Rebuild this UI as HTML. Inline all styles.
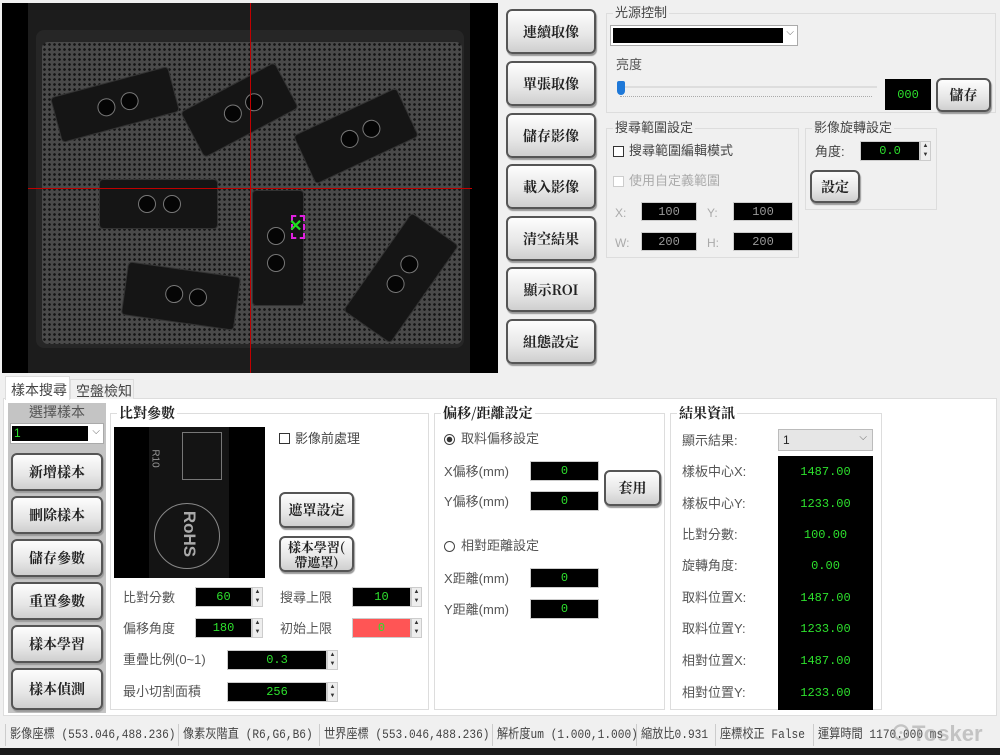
<!DOCTYPE html>
<html><head><meta charset="utf-8">
<style>
*{margin:0;padding:0;box-sizing:border-box}
body{width:1000px;height:755px;background:#f0f0f0;position:relative;overflow:hidden;font-family:"Liberation Sans","Noto Sans CJK TC",sans-serif;font-size:13px;color:#333}
.a{position:absolute}
.btn{position:absolute;border:2px solid #555;border-radius:6px;background:linear-gradient(#fdfdfd,#e6e6e6 60%,#cfcfcf);box-shadow:1px 2px 1px #999;font-family:"Noto Serif CJK SC","Liberation Serif",serif;font-weight:bold;font-size:14px;color:#222;display:flex;align-items:center;justify-content:center;text-align:center;line-height:16px}
.grp{position:absolute;border:1px solid #ddd}
.gt{position:absolute;top:-9px;left:6px;background:#f0f0f0;padding:0 2px;font-size:13px;color:#444;line-height:16px}
.wh .gt{background:#fff}
.blk{position:absolute;background:#000;color:#2de02d;font-family:"Liberation Mono","DejaVu Sans Mono",monospace;font-size:12px;display:flex;align-items:center;justify-content:center;border:1px solid #ccc}
.spin{position:absolute;width:11px;background:#eee;border:1px solid #ccc;font-size:6px;line-height:9px;text-align:center;color:#333}
.lbl{position:absolute;font-size:13px;color:#555;line-height:16px;white-space:nowrap}
.pcb{position:absolute;background:#151515;border-radius:3px;box-shadow:0 0 0 1px #333}
.pcb i{position:absolute;width:18px;height:18px;border-radius:50%;background:#050505;border:1px solid #777}
.sep{position:absolute;top:724px;width:1px;height:22px;background:#ccc}
.st{position:absolute;top:722px;height:26px;font-family:"Liberation Mono","Noto Sans CJK TC",monospace;font-size:13px;color:#444;line-height:26px;white-space:nowrap;transform:scaleX(0.86);transform-origin:left center}
</style></head><body>
<!-- camera -->
<div class="a" style="left:2px;top:3px;width:496px;height:370px;background:#000"></div>
<div class="a" style="left:28px;top:3px;width:442px;height:370px;background:#1c1c1c"></div>
<div class="a" style="left:36px;top:30px;width:428px;height:318px;background:#262626;border-radius:8px"></div>
<div class="a" style="left:42px;top:42px;width:420px;height:302px;border-radius:6px;background-color:#4a4a4a;background-image:radial-gradient(circle,#151515 1.2px,transparent 1.5px);background-size:5px 5px"></div>
<div class="pcb" style="left:55px;top:82px;width:120px;height:45px;transform:rotate(-15deg)"><i style="left:42px;top:14px"></i><i style="left:66px;top:14px"></i></div>
<div class="pcb" style="left:187px;top:85px;width:105px;height:50px;transform:rotate(-28deg)"><i style="left:36px;top:16px"></i><i style="left:60px;top:16px"></i></div>
<div class="pcb" style="left:300px;top:110px;width:112px;height:52px;transform:rotate(-25deg)"><i style="left:40px;top:17px"></i><i style="left:64px;top:17px"></i></div>
<div class="pcb" style="left:100px;top:180px;width:117px;height:48px;"><i style="left:38px;top:15px"></i><i style="left:63px;top:15px"></i></div>
<div class="pcb" style="left:253px;top:191px;width:50px;height:114px;"><i style="left:14px;top:36px"></i><i style="left:14px;top:63px"></i></div>
<div class="pcb" style="left:125px;top:270px;width:112px;height:52px;transform:rotate(8deg)"><i style="left:40px;top:16px"></i><i style="left:64px;top:16px"></i></div>
<div class="pcb" style="left:342px;top:250px;width:118px;height:56px;transform:rotate(-55deg)"><i style="left:42px;top:18px"></i><i style="left:66px;top:18px"></i></div>
<div class="a" style="left:28px;top:188px;width:444px;height:1px;background:#c00000"></div>
<div class="a" style="left:250px;top:3px;width:1px;height:370px;background:#c00000"></div>
<div class="a" style="left:291px;top:215px;width:14px;height:24px;border:2px dashed #e020e0"></div>
<div class="a" style="left:289px;top:218px;color:#20e020;font-weight:bold;font-size:16px;line-height:18px">✕</div>
<!-- right buttons -->
<div class="btn" style="left:506px;top:9px;width:90px;height:45px">連續取像</div>
<div class="btn" style="left:506px;top:61px;width:90px;height:45px">單張取像</div>
<div class="btn" style="left:506px;top:113px;width:90px;height:45px">儲存影像</div>
<div class="btn" style="left:506px;top:164px;width:90px;height:45px">載入影像</div>
<div class="btn" style="left:506px;top:216px;width:90px;height:45px">清空結果</div>
<div class="btn" style="left:506px;top:267px;width:90px;height:45px">顯示ROI</div>
<div class="btn" style="left:506px;top:319px;width:90px;height:45px">組態設定</div>
<!-- light -->
<div class="grp" style="left:606px;top:13px;width:390px;height:100px"><span class="gt">光源控制</span></div>
<div class="a" style="left:610px;top:25px;width:188px;height:21px;background:#fff;border:1px solid #aaa"><div class="a" style="left:2px;top:2px;width:170px;height:15px;background:#000"></div><span class="a" style="right:3px;top:1px;font-size:10px;color:#666">⌵</span></div>
<div class="lbl" style="left:616px;top:57px">亮度</div>
<div class="a" style="left:620px;top:86px;width:257px;height:2px;background:#ddd"></div>
<div class="a" style="left:620px;top:96px;width:252px;height:1px;border-top:1px dotted #aaa"></div>
<div class="a" style="left:617px;top:81px;width:8px;height:14px;background:#1e78d8;border-radius:2px 2px 4px 4px"></div>
<div class="blk" style="left:885px;top:79px;width:46px;height:31px;border:none">000</div>
<div class="btn" style="left:936px;top:78px;width:55px;height:34px">儲存</div>
<!-- search range -->
<div class="grp" style="left:606px;top:128px;width:193px;height:130px"><span class="gt">搜尋範圍設定</span></div>
<div class="a" style="left:613px;top:146px;width:11px;height:11px;border:1px solid #333;background:#fff"></div>
<div class="lbl" style="left:629px;top:143px;color:#444">搜尋範圍編輯模式</div>
<div class="a" style="left:613px;top:176px;width:11px;height:11px;border:1px solid #ccc;background:#fff"></div>
<div class="lbl" style="left:629px;top:173px;color:#aaa">使用自定義範圍</div>
<div class="lbl" style="left:615px;top:205px;color:#aaa;font-size:12px">X:</div>
<div class="blk" style="left:641px;top:202px;width:56px;height:19px;color:#999">100</div>
<div class="lbl" style="left:707px;top:205px;color:#aaa;font-size:12px">Y:</div>
<div class="blk" style="left:733px;top:202px;width:60px;height:19px;color:#999">100</div>
<div class="lbl" style="left:615px;top:235px;color:#aaa;font-size:12px">W:</div>
<div class="blk" style="left:641px;top:232px;width:56px;height:19px;color:#999">200</div>
<div class="lbl" style="left:707px;top:235px;color:#aaa;font-size:12px">H:</div>
<div class="blk" style="left:733px;top:232px;width:60px;height:19px;color:#999">200</div>
<!-- rotate -->
<div class="grp" style="left:805px;top:128px;width:132px;height:82px"><span class="gt">影像旋轉設定</span></div>
<div class="lbl" style="left:815px;top:144px;color:#444">角度:</div>
<div class="blk" style="left:860px;top:141px;width:60px;height:20px">0.0</div>
<div class="spin" style="left:920px;top:141px;height:20px">▲<br>▼</div>
<div class="btn" style="left:810px;top:170px;width:50px;height:33px">設定</div>
<!-- tabs -->
<div class="a" style="left:3px;top:398px;width:994px;height:318px;background:#fff;border:1px solid #ddd"></div>
<div class="a" style="left:5px;top:376px;width:65px;height:24px;background:#fff;border:1px solid #ddd;border-bottom:none;font-size:14px;color:#444;padding:3px 0 0 5px">樣本搜尋</div>
<div class="a" style="left:70px;top:379px;width:64px;height:20px;background:#f0f0f0;border:1px solid #ddd;border-bottom:none;font-size:14px;color:#444;padding:1px 0 0 5px">空盤檢知</div>
<!-- left gray panel -->
<div class="a" style="left:8px;top:403px;width:98px;height:310px;background:#c4c4c4"></div>
<div class="lbl" style="left:29px;top:404px;font-size:14px;color:#555">選擇樣本</div>
<div class="a" style="left:10px;top:423px;width:94px;height:21px;background:#fff;border:1px solid #aaa"><div class="a" style="left:1px;top:2px;width:76px;height:15px;background:#000;color:#2de02d;font-size:12px;line-height:15px;padding-left:2px">1</div><span class="a" style="right:3px;top:2px;font-size:10px;color:#666">⌵</span></div>
<div class="btn" style="left:11px;top:453px;width:92px;height:38px">新增樣本</div>
<div class="btn" style="left:11px;top:496px;width:92px;height:38px">刪除樣本</div>
<div class="btn" style="left:11px;top:539px;width:92px;height:38px">儲存參數</div>
<div class="btn" style="left:11px;top:582px;width:92px;height:38px">重置參數</div>
<div class="btn" style="left:11px;top:625px;width:92px;height:38px">樣本學習</div>
<div class="btn" style="left:11px;top:668px;width:92px;height:42px">樣本偵測</div>
<!-- 比對參數 -->
<div class="grp wh" style="left:110px;top:413px;width:319px;height:297px"><span class="gt" style="font-weight:bold;font-size:14px;color:#222;font-family:'Noto Serif CJK SC',serif">比對參數</span></div>
<div class="a" style="left:114px;top:427px;width:151px;height:151px;background:#000"><div class="a" style="left:35px;top:0;width:80px;height:151px;background:#141414"></div><div class="a" style="left:68px;top:5px;width:40px;height:48px;border:1px solid #777"></div><div class="a" style="left:40px;top:76px;width:66px;height:66px;border:1px solid #888;border-radius:50%"></div><div class="a" style="left:52px;top:97px;color:#aaa;font-size:17px;transform:rotate(90deg);font-weight:bold">RoHS</div><div class="a" style="left:32px;top:26px;color:#999;font-size:10px;transform:rotate(90deg)">R10</div></div>
<div class="a" style="left:279px;top:433px;width:11px;height:11px;border:1px solid #333"></div>
<div class="lbl" style="left:295px;top:431px;color:#444">影像前處理</div>
<div class="btn" style="left:279px;top:492px;width:75px;height:36px">遮罩設定</div>
<div class="btn" style="left:279px;top:536px;width:75px;height:36px;font-size:13px;line-height:15px">樣本學習(<br>帶遮罩)</div>
<div class="lbl" style="left:123px;top:590px">比對分數</div>
<div class="blk" style="left:195px;top:587px;width:57px;height:20px">60</div><div class="spin" style="left:252px;top:587px;height:20px">▲<br>▼</div>
<div class="lbl" style="left:280px;top:590px">搜尋上限</div>
<div class="blk" style="left:352px;top:587px;width:59px;height:20px">10</div><div class="spin" style="left:411px;top:587px;height:20px">▲<br>▼</div>
<div class="lbl" style="left:123px;top:621px">偏移角度</div>
<div class="blk" style="left:195px;top:618px;width:57px;height:20px">180</div><div class="spin" style="left:252px;top:618px;height:20px">▲<br>▼</div>
<div class="lbl" style="left:280px;top:621px">初始上限</div>
<div class="blk" style="left:352px;top:618px;width:59px;height:20px;background:#f55">0</div><div class="spin" style="left:411px;top:618px;height:20px">▲<br>▼</div>
<div class="lbl" style="left:123px;top:652px">重疊比例(0~1)</div>
<div class="blk" style="left:227px;top:650px;width:100px;height:20px">0.3</div><div class="spin" style="left:327px;top:650px;height:20px">▲<br>▼</div>
<div class="lbl" style="left:123px;top:684px">最小切割面積</div>
<div class="blk" style="left:227px;top:682px;width:100px;height:20px">256</div><div class="spin" style="left:327px;top:682px;height:20px">▲<br>▼</div>
<!-- 偏移 -->
<div class="grp wh" style="left:434px;top:413px;width:231px;height:297px"><span class="gt" style="font-weight:bold;font-size:14px;color:#222;font-family:'Noto Serif CJK SC',serif">偏移/距離設定</span></div>
<div class="a" style="left:444px;top:434px;width:11px;height:11px;border:1px solid #444;border-radius:50%;background:radial-gradient(#333 2.5px,#fff 3px)"></div>
<div class="lbl" style="left:461px;top:431px">取料偏移設定</div>
<div class="lbl" style="left:444px;top:464px">X偏移(mm)</div>
<div class="blk" style="left:530px;top:461px;width:69px;height:20px">0</div>
<div class="lbl" style="left:444px;top:494px">Y偏移(mm)</div>
<div class="blk" style="left:530px;top:491px;width:69px;height:20px">0</div>
<div class="btn" style="left:604px;top:470px;width:57px;height:36px">套用</div>
<div class="a" style="left:444px;top:541px;width:11px;height:11px;border:1px solid #444;border-radius:50%"></div>
<div class="lbl" style="left:461px;top:538px">相對距離設定</div>
<div class="lbl" style="left:444px;top:571px">X距離(mm)</div>
<div class="blk" style="left:530px;top:568px;width:69px;height:20px">0</div>
<div class="lbl" style="left:444px;top:602px">Y距離(mm)</div>
<div class="blk" style="left:530px;top:599px;width:69px;height:20px">0</div>
<!-- 結果 -->
<div class="grp wh" style="left:670px;top:413px;width:212px;height:297px"><span class="gt" style="font-weight:bold;font-size:14px;color:#222;font-family:'Noto Serif CJK SC',serif">結果資訊</span></div>
<div class="lbl" style="left:682px;top:433px">顯示結果:</div>
<div class="a" style="left:778px;top:429px;width:95px;height:22px;background:#e6e6e6;border:1px solid #bbb;font-size:12px;padding:3px 4px;color:#222">1<span style="position:absolute;right:5px;top:2px;font-size:10px;color:#666">⌵</span></div>
<div class="a" style="left:778px;top:456px;width:95px;height:254px;background:#000"></div>
<div class="lbl" style="left:682px;top:464px">樣板中心X:</div><div class="blk" style="left:778px;top:462px;width:95px;height:20px;border:none">1487.00</div>
<div class="lbl" style="left:682px;top:496px">樣板中心Y:</div><div class="blk" style="left:778px;top:494px;width:95px;height:20px;border:none">1233.00</div>
<div class="lbl" style="left:682px;top:527px">比對分數:</div><div class="blk" style="left:778px;top:525px;width:95px;height:20px;border:none">100.00</div>
<div class="lbl" style="left:682px;top:558px">旋轉角度:</div><div class="blk" style="left:778px;top:556px;width:95px;height:20px;border:none">0.00</div>
<div class="lbl" style="left:682px;top:590px">取料位置X:</div><div class="blk" style="left:778px;top:588px;width:95px;height:20px;border:none">1487.00</div>
<div class="lbl" style="left:682px;top:621px">取料位置Y:</div><div class="blk" style="left:778px;top:619px;width:95px;height:20px;border:none">1233.00</div>
<div class="lbl" style="left:682px;top:653px">相對位置X:</div><div class="blk" style="left:778px;top:651px;width:95px;height:20px;border:none">1487.00</div>
<div class="lbl" style="left:682px;top:685px">相對位置Y:</div><div class="blk" style="left:778px;top:683px;width:95px;height:20px;border:none">1233.00</div>
<!-- status -->
<div class="sep" style="left:5px"></div>
<div class="st" style="left:10px">影像座標 (553.046,488.236)</div>
<div class="sep" style="left:178px"></div>
<div class="st" style="left:183px">像素灰階直 (R6,G6,B6)</div>
<div class="sep" style="left:319px"></div>
<div class="st" style="left:324px">世界座標 (553.046,488.236)</div>
<div class="sep" style="left:492px"></div>
<div class="st" style="left:497px">解析度um (1.000,1.000)</div>
<div class="sep" style="left:636px"></div>
<div class="st" style="left:641px">縮放比0.931</div>
<div class="sep" style="left:715px"></div>
<div class="st" style="left:720px">座標校正 False</div>
<div class="sep" style="left:813px"></div>
<div class="st" style="left:818px">運算時間 1170.000 ms</div>
<div class="a" style="left:890px;top:720px;font-size:22px;font-weight:bold;color:rgba(150,150,150,0.5);line-height:28px">⊙Tosker</div>
<div class="a" style="left:0;top:748px;width:1000px;height:7px;background:#1a1a1a"></div>
</body></html>
